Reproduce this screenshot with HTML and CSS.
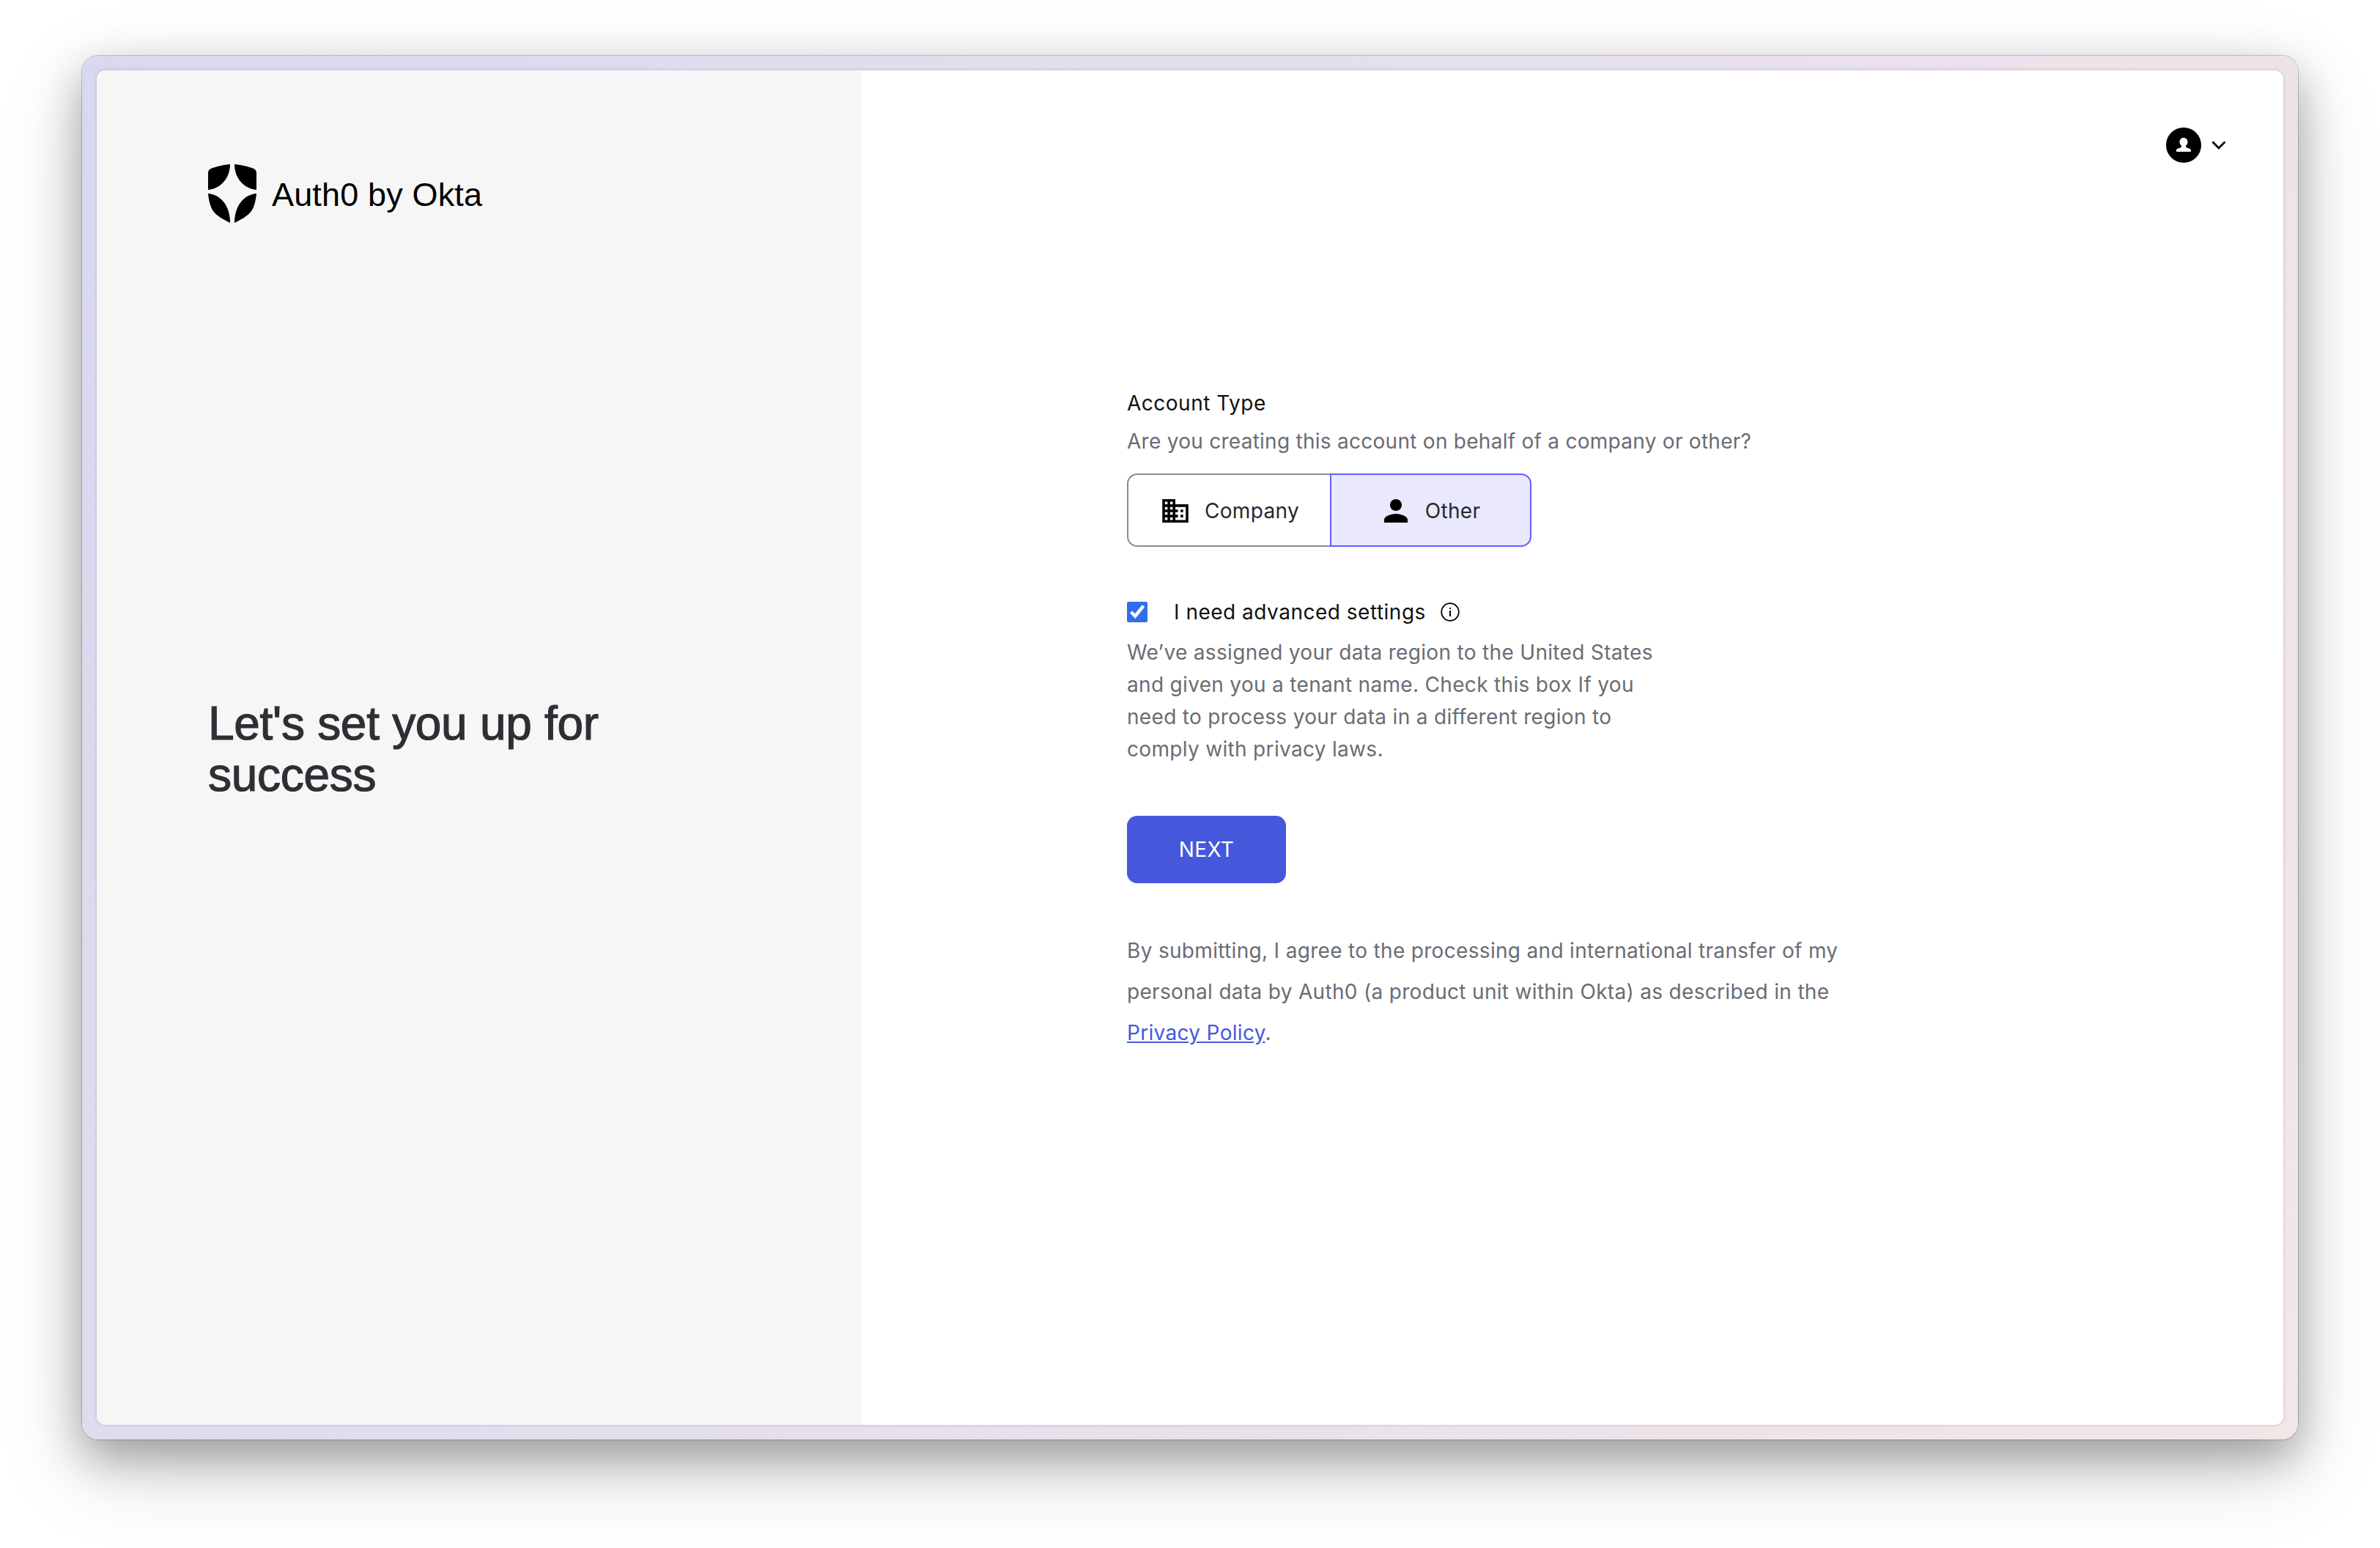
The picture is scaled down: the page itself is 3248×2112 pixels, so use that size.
FILE: index.html
```html
<!DOCTYPE html>
<html lang="en">
<head>
<meta charset="utf-8">
<title>Auth0 by Okta</title>
<link rel="stylesheet" href="styles.css">
</head>
<body>
<div class="frame">
  <main class="window">
    <aside class="side">
      <div class="brand">
        <svg class="brand-mark" viewBox="0 0 66 80" aria-hidden="true">
          <path d="M30 0C20 1 10 3.5 4 6C1.5 7 0 9 0 12L0 35C14 34 30 22 30 0Z"/>
          <path d="M36 0C46 1 56 3.500 62 6C64.500 7 66 9 66 12L66 35C52 34 36 22 36 0Z"/>
          <path d="M0 40C1 50 3 58 7 64C12 71 22 76 30 80C30 60 20 42 0 40Z"/>
          <path d="M66 40C65 50 63 58 59 64C54 71 44 76 36 80C36 60 46 42 66 40Z"/>
        </svg>
        <span class="brand-name">Auth0 by Okta</span>
      </div>
      <h1 class="headline">Let's set you up for<br>success</h1>
    </aside>
    <section class="content">
      <header class="topbar">
        <svg class="avatar" viewBox="0 0 48 48" aria-hidden="true">
          <circle cx="24" cy="24" r="24" fill="#000"/>
          <path fill="#fff" d="M24 14c-3.500 0-5.500 2.500-5.500 5.500 0 2.500 1 4 2.500 5.500v1.500c-1 1.500-6 1.500-7 4V33h20v-2.500c-1-2.500-6-2.500-7-4V25c1.500-1.500 2.500-3 2.500-5.500 0-3-2-5.500-5.500-5.500z"/>
        </svg>
        <svg class="chevron" viewBox="0 0 20 12" aria-hidden="true">
          <path d="M1.500 1.500L10 10L18.500 1.500" fill="none" stroke="#000" stroke-width="2.800"/>
        </svg>
      </header>
      <form class="form">
        <div class="label">Account Type</div>
        <p class="sub">Are you creating this account on behalf of a company or other?</p>
        <div class="toggle">
          <button type="button" class="opt opt-company">
            <svg class="icon-building" viewBox="2 3 20 18" aria-hidden="true"><path d="M12 7V3H2v18h20V7H12zM6 19H4v-2h2v2zm0-4H4v-2h2v2zm0-4H4V9h2v2zm0-4H4V5h2v2zm4 12H8v-2h2v2zm0-4H8v-2h2v2zm0-4H8V9h2v2zm0-4H8V5h2v2zm10 12h-8v-2h2v-2h-2v-2h2v-2h-2V9h8v10zm-2-8h-2v2h2v-2zm0 4h-2v2h2v-2z"/></svg>
            <span>Company</span>
          </button>
          <button type="button" class="opt opt-other">
            <svg class="icon-person" viewBox="4 4 16 16" aria-hidden="true"><path d="M12 12c2.210 0 4-1.790 4-4s-1.790-4-4-4-4 1.790-4 4 1.790 4 4 4zm0 2c-2.670 0-8 1.340-8 4v2h16v-2c0-2.660-5.330-4-8-4z"/></svg>
            <span>Other</span>
          </button>
        </div>
        <label class="check-row">
          <input class="check" type="checkbox" checked>
          <span class="check-text">I need advanced settings</span>
          <svg class="info" viewBox="0 0 26 26" aria-hidden="true">
            <circle cx="13" cy="13" r="11.800" fill="none" stroke="#000" stroke-width="1.800"/>
            <rect x="12" y="11" width="2" height="8"/>
            <rect x="12" y="7" width="2" height="2"/>
          </svg>
        </label>
        <p class="desc">We’ve assigned your data region to the United States<br>and given you a tenant name. Check this box If you<br>need to process your data in a different region to<br>comply with privacy laws.</p>
        <button type="button" class="next">NEXT</button>
        <p class="legal">By submitting, I agree to the processing and international transfer of my<br>personal data by Auth0 (a product unit within Okta) as described in the<br><a class="link" href="#">Privacy Policy</a>.</p>
      </form>
    </section>
  </main>
</div>
</body>
</html>
```

FILE: styles.css
```css
* { box-sizing: border-box; }

html, body { margin: 0; height: 100%; background: #fff; }

body {
  padding: 76px 112px 0;
  overflow: hidden;
  font-family: "Inter", "Liberation Sans", sans-serif;
}

.frame {
  width: 3024px;
  height: 1888px;
  padding: 20px;
  border-radius: 22px;
  background: linear-gradient(115deg, #d8d8ef 0%, #e6e0ec 50%, #f2e6e7 100%);
  box-shadow:
    0 0 0 1px rgba(0, 0, 0, 0.2),
    0 24px 60px rgba(0, 0, 0, 0.3),
    0 40px 120px rgba(0, 0, 0, 0.16);
}

.window {
  display: flex;
  height: 100%;
  border-radius: 12px;
  overflow: hidden;
  background: #fff;
  box-shadow: 0 0 4px rgba(70, 50, 90, 0.22);
}

.side {
  flex: 0 0 1044px;
  display: grid;
  grid-template-rows: 1fr auto 1fr;
  padding-left: 152px;
  background: #f6f6f6;
}

.brand {
  display: flex;
  align-items: flex-start;
  gap: 21px;
  padding-top: 128px;
}

.brand-mark { width: 66px; height: 80px; flex: none; fill: #000; }

.brand-name {
  margin-top: 14px;
  font-family: "Liberation Sans", sans-serif;
  font-size: 45px;
  line-height: 56px;
  letter-spacing: 0.15px;
  color: #000;
}

.headline {
  margin: 0;
  padding-top: 4px;
  font-family: "Liberation Sans", sans-serif;
  font-size: 64px;
  font-weight: 400;
  line-height: 70px;
  letter-spacing: -0.3px;
  color: #2e2f35;
  -webkit-text-stroke: 1.2px #2e2f35;
}

.content { flex: 1; min-width: 0; }

.topbar {
  display: flex;
  justify-content: flex-end;
  align-items: center;
  gap: 14px;
  padding: 78px 78px 0 0;
}

.avatar { width: 48px; height: 48px; }
.chevron { width: 20px; height: 12px; }

.form {
  padding: 310px 0 0 362px;
  font-size: 28px;
  letter-spacing: 0.32px;
}

.label {
  line-height: 36px;
  letter-spacing: 0.5px;
  color: #111;
}

.sub {
  margin: 16px 0 0;
  line-height: 36px;
  letter-spacing: 0.27px;
  color: #6a6c73;
}

.toggle {
  display: flex;
  width: 552px;
  height: 100px;
  margin-top: 26px;
}

.opt {
  display: flex;
  align-items: center;
  justify-content: center;
  margin: 0;
  padding: 2px 0 0 4px;
  font: inherit;
  letter-spacing: inherit;
  color: #27282c;
  cursor: pointer;
}

.opt-company {
  width: 277px;
  gap: 22px;
  background: #fff;
  border: 2px solid #8c8c8c;
  border-right: 0;
  border-radius: 14px 0 0 14px;
}

.opt-other {
  width: 275px;
  gap: 24px;
  background: #e9e8fc;
  border: 2px solid #635dff;
  border-radius: 0 14px 14px 0;
}

.icon-building { width: 36px; height: 32px; fill: #000; }
.icon-person { width: 32px; height: 32px; fill: #000; }

.check-row {
  display: flex;
  align-items: center;
  height: 30px;
  margin-top: 74px;
}

.check {
  width: 28px;
  height: 28px;
  margin: 0;
  accent-color: #2f6fed;
}

.check-text {
  margin-left: 36px;
  letter-spacing: 0.5px;
  color: #111;
}

.info { width: 26px; height: 26px; margin-left: 20px; fill: #000; }

.desc {
  margin: 18px 0 0;
  line-height: 44px;
  color: #6a6c73;
}

.next {
  display: block;
  width: 217px;
  height: 92px;
  margin: 69px 0 0;
  padding: 0;
  border: 0;
  border-radius: 14px;
  background: #4558dc;
  color: #fff;
  font: inherit;
  letter-spacing: inherit;
  cursor: pointer;
}

.legal {
  margin: 64px 0 0;
  line-height: 56px;
  color: #6a6c73;
}

.link { color: #4558dc; text-decoration: underline; }
```
